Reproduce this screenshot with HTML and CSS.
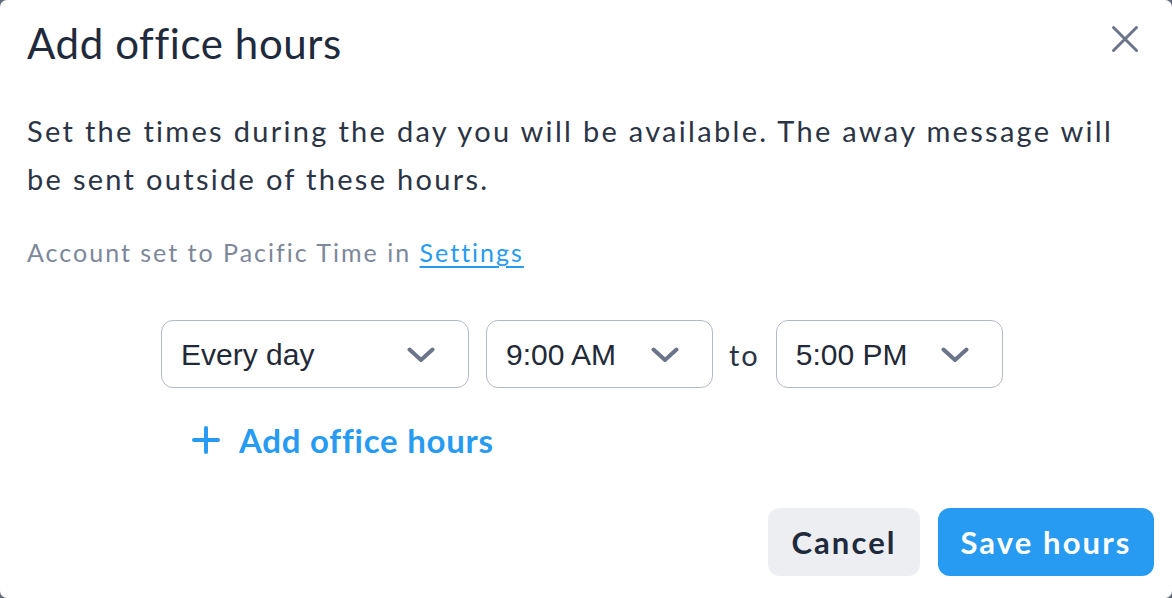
FILE: index.html
```html
<!DOCTYPE html>
<html lang="en">
<head>
<meta charset="utf-8">
<title>Add office hours</title>
<link rel="stylesheet" href="styles.css">
</head>
<body>
<div class="dialog">
  <div class="header">
    <h1 class="title">Add office hours</h1>
    <button class="close" aria-label="Close">
      <svg width="28" height="28" viewBox="0 0 28 28"><path d="M2.5 2.5 L25.5 25.5 M25.5 2.5 L2.5 25.5" stroke="#6b7489" stroke-width="3" stroke-linecap="round" fill="none"/></svg>
    </button>
  </div>
  <p class="desc">Set the times during the day you will be available. The away message will be sent outside of these hours.</p>
  <p class="tz">Account set to Pacific Time in <a href="#" class="link">Settings</a></p>
  <div class="hours">
    <div class="row">
      <div class="select select-day"><span>Every day</span><svg class="chev" width="28" height="16" viewBox="0 0 28 16"><path d="M2.5 2.5 L14 13 L25.5 2.5" stroke="#6b7489" stroke-width="4" stroke-linecap="round" stroke-linejoin="round" fill="none"/></svg></div>
      <div class="select select-time"><span>9:00 AM</span><svg class="chev" width="28" height="16" viewBox="0 0 28 16"><path d="M2.5 2.5 L14 13 L25.5 2.5" stroke="#6b7489" stroke-width="4" stroke-linecap="round" stroke-linejoin="round" fill="none"/></svg></div>
      <span class="to">to</span>
      <div class="select select-time"><span>5:00 PM</span><svg class="chev" width="28" height="16" viewBox="0 0 28 16"><path d="M2.5 2.5 L14 13 L25.5 2.5" stroke="#6b7489" stroke-width="4" stroke-linecap="round" stroke-linejoin="round" fill="none"/></svg></div>
    </div>
    <a href="#" class="add">
      <svg width="28" height="28" viewBox="0 0 28 28"><path d="M14 2 L14 26 M2 14 L26 14" stroke="#279af1" stroke-width="4" stroke-linecap="round" fill="none"/></svg>
      <span>Add office hours</span>
    </a>
  </div>
  <div class="actions">
    <button class="btn btn-cancel">Cancel</button>
    <button class="btn btn-save">Save hours</button>
  </div>
</div>
</body>
</html>
```
FILE: styles.css
```css
html, body {
  margin: 0;
  padding: 0;
  height: 100%;
}
body {
  background: #606a7b;
  font-family: "Lato", "Liberation Sans", sans-serif;
  overflow: hidden;
}
.dialog {
  box-sizing: border-box;
  width: 1172px;
  height: 598px;
  background: #ffffff;
  border-radius: 7px;
  padding: 18px 18px 0 27px;
}
.header {
  display: flex;
  justify-content: space-between;
  align-items: flex-start;
  padding-right: 15px;
}
.title {
  margin: 0;
  font-size: 42px;
  line-height: 50px;
  font-weight: 400;
  letter-spacing: 0.6px;
  color: #1f2a3c;
}
.close {
  border: 0;
  background: none;
  padding: 0;
  margin-top: 7px;
  width: 28px;
  height: 28px;
  display: block;
}
.close svg { display: block; }
.desc {
  margin: 39px 0 0;
  font-size: 29px;
  line-height: 48px;
  letter-spacing: 2.3px;
  color: #2b3445;
  width: 1118px;
}
.tz {
  margin: 31px 0 0;
  font-size: 25px;
  line-height: 36px;
  letter-spacing: 2px;
  color: #7c879a;
}
.link {
  color: #279af1;
  text-decoration: underline;
  text-decoration-thickness: 2px;
  text-underline-offset: 4px;
}
.hours {
  margin-top: 50px;
  padding-left: 134px;
}
.row {
  display: flex;
  align-items: center;
}
.select {
  box-sizing: border-box;
  height: 68px;
  border: 1px solid #b4b9c6;
  border-radius: 12px;
  display: flex;
  align-items: center;
  justify-content: space-between;
  padding: 0 33px 0 19px;
  font-family: "Liberation Sans", Arial, sans-serif;
  font-size: 30px;
  color: #1f2937;
}
.select span { margin-top: 2px; }
.select-day { width: 308px; margin-right: 17px; }
.select-time { width: 227px; }
.chev { display: block; margin-top: 2px; }
.to {
  margin: 0 16px 0 16px;
  font-size: 29px;
  letter-spacing: 2px;
  color: #2b3445;
}
.add {
  display: inline-flex;
  align-items: center;
  gap: 19px;
  margin: 32px 0 0 31px;
  height: 40px;
  color: #279af1;
  text-decoration: none;
  font-size: 33px;
  letter-spacing: 0.75px;
  font-weight: 700;
}
.add svg { display: block; }
.actions {
  display: flex;
  justify-content: flex-end;
  gap: 18px;
  margin-top: 48px;
}
.btn {
  height: 68px;
  border: 0;
  border-radius: 12px;
  padding: 0;
  font-family: "Lato", "Liberation Sans", sans-serif;
  font-size: 31px;
  letter-spacing: 2.1px;
  font-weight: 700;
}
.btn-cancel {
  background: #eceef2;
  color: #1f2a3c;
  width: 152px;
}
.btn-save {
  background: #279af1;
  color: #ffffff;
  width: 216px;
}
```
